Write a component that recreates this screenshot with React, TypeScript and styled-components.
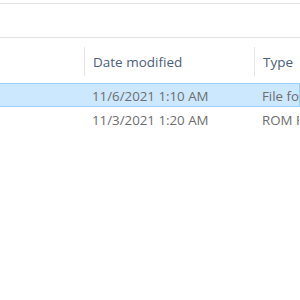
import React from 'react';
import styled, { createGlobalStyle } from 'styled-components';

interface FileRow {
  name: string;
  modified: string;
  type: string;
  selected?: boolean;
}

const rows: FileRow[] = [
  { name: 'roms', modified: '11/6/2021 1:10 AM', type: 'File folder', selected: true },
  { name: 'game.rom', modified: '11/3/2021 1:20 AM', type: 'ROM File' },
];

const GlobalStyle = createGlobalStyle`
  html, body {
    margin: 0;
    padding: 0;
    background: #ffffff;
    overflow: hidden;
  }
  body {
    font-family: 'Open Sans', 'Noto Sans', sans-serif;
  }
`;

const Window = styled.div`
  width: 300px;
  height: 300px;
  overflow: hidden;
  background: #ffffff;
`;

const Toolbar = styled.div`
  margin-top: 3px;
  height: 33px;
  border-top: 1px solid #e3e3e3;
  border-bottom: 1px solid #e3e3e3;
`;

const Columns = styled.div`
  display: grid;
  grid-template-columns: 84px 170px 1fr;
  white-space: nowrap;
`;

const HeaderRow = styled(Columns)`
  height: 45px;
`;

const HeaderCell = styled.div`
  display: flex;
  align-items: center;
  gap: 8px;
  overflow: hidden;
  font-size: 13.5px;
  color: #4c607a;
`;

const HeaderLabel = styled.span`
  padding-top: 2px;
`;

const Separator = styled.span`
  flex: none;
  width: 1px;
  height: 29px;
  margin-top: 2px;
  background: #e5e5e5;
`;

const Row = styled(Columns)<{ $selected?: boolean }>`
  height: 24px;
  box-sizing: border-box;
  align-items: center;
  padding-top: 1px;
  border: 1px solid ${(p) => (p.$selected ? '#99d1ff' : 'transparent')};
  border-left: none;
  background: ${(p) => (p.$selected ? '#cce8ff' : 'transparent')};
`;

const Cell = styled.div`
  overflow: hidden;
  padding-left: 8px;
  font-size: 13.3px;
  color: #6d6d6d;
`;

const NameCell = styled(Cell)`
  visibility: hidden;
`;

const App = () => {
  return (
    <Window>
      <GlobalStyle />
      <Toolbar />
      <HeaderRow>
        <HeaderCell />
        <HeaderCell>
          <Separator />
          <HeaderLabel>Date modified</HeaderLabel>
        </HeaderCell>
        <HeaderCell>
          <Separator />
          <HeaderLabel>Type</HeaderLabel>
        </HeaderCell>
      </HeaderRow>
      {rows.map((r) => (
        <Row key={r.name} $selected={r.selected}>
          <NameCell>{r.name}</NameCell>
          <Cell>{r.modified}</Cell>
          <Cell>{r.type}</Cell>
        </Row>
      ))}
    </Window>
  );
};

export default App;
